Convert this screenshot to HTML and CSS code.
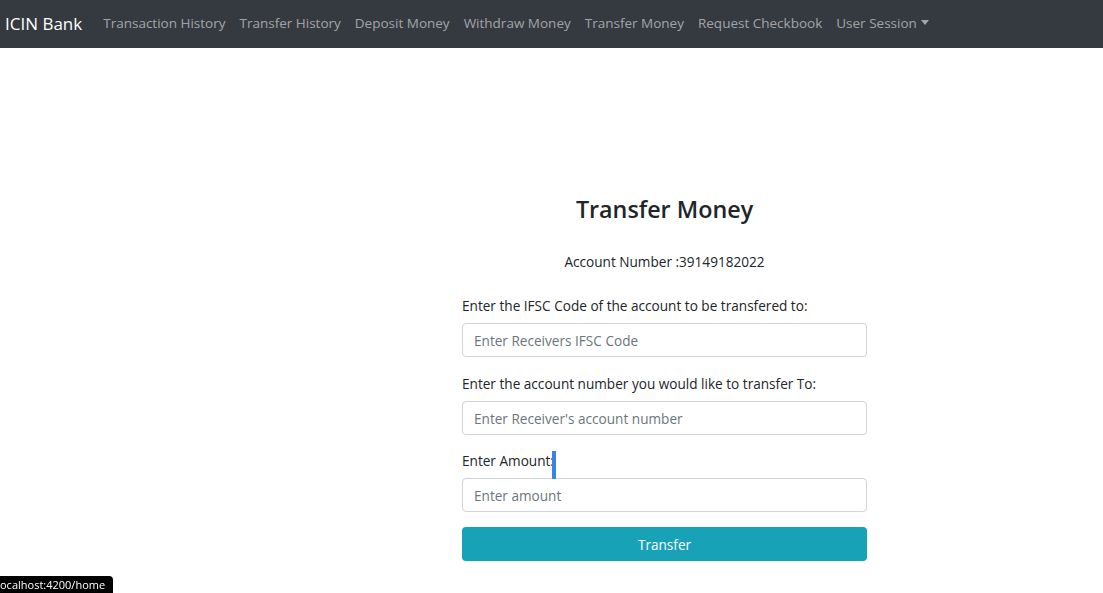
FILE: index.html
```html
<!DOCTYPE html>
<html>
<head>
<meta charset="utf-8">
<link rel="stylesheet" href="styles.css">
</head>
<body>
<nav class="navbar">
  <span class="brand">ICIN Bank</span>
  <ul class="nav">
    <li class="nav-link">Transaction History</li>
    <li class="nav-link">Transfer History</li>
    <li class="nav-link">Deposit Money</li>
    <li class="nav-link">Withdraw Money</li>
    <li class="nav-link">Transfer Money</li>
    <li class="nav-link">Request Checkbook</li>
    <li class="nav-link dropdown">User Session<span class="caret"></span></li>
  </ul>
</nav>
<main class="page">
  <form class="transfer">
    <h2 class="title">Transfer Money</h2>
    <p class="account">Account Number :39149182022</p>
    <label class="label first">Enter the IFSC Code of the account to be transfered to:</label>
    <input class="input" type="text" placeholder="Enter Receivers IFSC Code">
    <label class="label">Enter the account number you would like to transfer To:</label>
    <input class="input" type="text" placeholder="Enter Receiver's account number">
    <label class="label tight">Enter Amount:<span class="caret-mark"></span></label>
    <input class="input" type="text" placeholder="Enter amount">
    <button class="btn" type="button">Transfer</button>
  </form>
</main>
<div class="status">ocalhost:4200/home</div>
</body>
</html>
```
FILE: styles.css
```css
* { box-sizing: border-box; }
body {
  margin: 0;
  font-family: "Open Sans", "Noto Sans", sans-serif;
  color: #212529;
  background: #fff;
}
.navbar {
  height: 48px;
  background: #343a40;
  display: flex;
  align-items: center;
  padding: 0 0 2px 5px;
}
.brand {
  color: #fff;
  font-size: 17px;
  margin-right: 14px;
}
.nav {
  display: flex;
  list-style: none;
  margin: 0;
  padding: 0;
}
.nav-link {
  color: rgba(255,255,255,0.55);
  font-size: 13.5px;
  padding: 0 7px;
}
.caret {
  display: inline-block;
  margin-left: 4px;
  vertical-align: 3px;
  border-top: 5px solid rgba(255,255,255,0.55);
  border-left: 4.5px solid transparent;
  border-right: 4.5px solid transparent;
}
.page {
  padding-top: 143px;
  padding-left: 462px;
}
.transfer {
  width: 405px;
  display: flex;
  flex-direction: column;
}
.title {
  margin: 0;
  text-align: center;
  font-size: 23.3px;
  font-weight: 600;
  line-height: 36px;
}
.account {
  margin: 25px 0 0;
  text-align: center;
  font-size: 13.6px;
  line-height: 20px;
}
.label {
  font-size: 13.6px;
  line-height: 20px;
  margin-top: 17px;
  margin-bottom: 7px;
  position: relative;
}
.label.first { margin-top: 24px; }
.label.tight { margin-top: 16px; }
.caret-mark {
  position: absolute;
  top: 0;
  margin-left: -2px;
  width: 4px;
  height: 28px;
  background: #3b82e8;
}
.input {
  height: 34px;
  border: 1px solid #ced4da;
  border-radius: 4px;
  padding: 0 11px;
  font-family: inherit;
  font-size: 13.6px;
  color: #495057;
}
.input::placeholder { color: #6c757d; }
.btn {
  margin-top: 15px;
  height: 34px;
  border: none;
  border-radius: 4px;
  background: #17a2b8;
  color: #fff;
  font-family: inherit;
  font-size: 13.6px;
}
.status {
  position: fixed;
  left: 0;
  bottom: 0;
  height: 17px;
  width: 113px;
  background: #000;
  color: #fff;
  font-size: 11px;
  line-height: 17px;
  border-top-right-radius: 4px;
  white-space: nowrap;
  overflow: hidden;
}
```
